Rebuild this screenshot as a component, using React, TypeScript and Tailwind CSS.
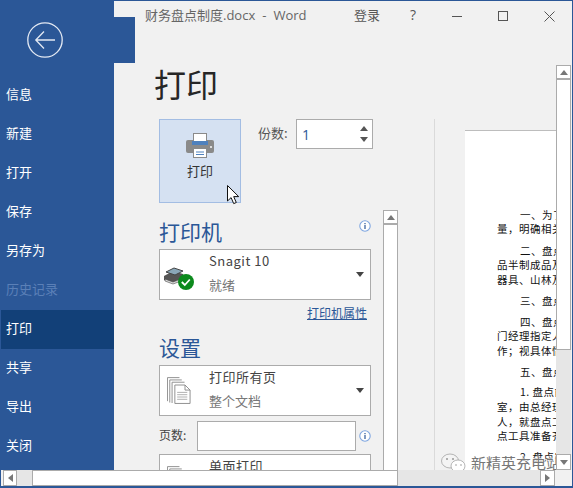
import React from "react";

const font = { fontFamily: '"Open Sans", "Noto Sans CJK SC", sans-serif' };
const cjk = { fontFamily: '"Noto Sans CJK SC", sans-serif' };

function Tri({ dir, color = "#555" }: { dir: "up" | "down" | "left" | "right"; color?: string }) {
  const pts = { up: "0,5 4,0 8,5", down: "0,0 8,0 4,5", left: "5,0 5,8 0,4", right: "0,0 0,8 5,4" }[dir];
  const vertical = dir === "up" || dir === "down";
  return (
    <svg width={vertical ? 8 : 5} height={vertical ? 5 : 8} viewBox={vertical ? "0 0 8 5" : "0 0 5 8"}>
      <polygon points={pts} fill={color} />
    </svg>
  );
}

function Info() {
  return (
    <svg width="12" height="12" viewBox="0 0 12 12">
      <circle cx="6" cy="6" r="5.2" fill="#fff" stroke="#7fa6e0" strokeWidth="1.1" />
      <rect x="5.4" y="5" width="1.2" height="4" fill="#2b5797" />
      <rect x="5.4" y="3" width="1.2" height="1.2" fill="#2b5797" />
    </svg>
  );
}

function ArrowBox({ dir, className = "" }: { dir: "up" | "down" | "left" | "right"; className?: string }) {
  return (
    <div className={`flex items-center justify-center bg-white border border-[#ababab] shrink-0 ${className}`}>
      <Tri dir={dir} color="#777" />
    </div>
  );
}

function Doc() {
  return (
    <svg width="24" height="28" viewBox="0 0 26 30" fill="none" stroke="#8a8a8a" strokeWidth="1">
      <path d="M.5 26V.5h13" />
      <path d="M3 27.5V3h13" />
      <path d="M5.5 28V5.5H19" />
      <path d="M8.5 28.5V8.5h11l5.5 5.5v14.5z" fill="#fff" />
      <path d="M19.5 8.5v5.5h5.5" />
      <path d="M11 16.5h11M11 19h11M11 21.5h11M11 24h11" stroke="#aaa" />
    </svg>
  );
}

function Select({ title, sub, icon }: { title: string; sub: string; icon: React.ReactNode }) {
  return (
    <div className="w-[212px] h-[51px] shrink-0 bg-white border border-[#ababab] flex items-center">
      <div className="w-[49px] h-full shrink-0 flex items-center pl-[7px]">{icon}</div>
      <div className="flex-1 flex flex-col h-full">
        <div className="h-[24px] pt-[1px] text-[13px] leading-[20px] text-[#444] tracking-[0.5px]">{title}</div>
        <div className="h-[24px] text-[13px] leading-[22px] text-[#777]">{sub}</div>
      </div>
      <div className="pr-[6px] flex"><Tri dir="down" color="#444" /></div>
    </div>
  );
}

const navItems = ["信息", "新建", "打开", "保存", "另存为", "历史记录", "打印", "共享", "导出", "关闭"];

const pageLines: [string, number, number][] = [
  ["一、为了加强公司财产管理", 23, 215],
  ["量，明确相关责任", 0, 229],
  ["二、盘点范围", 23, 251],
  ["品半制成品及原材料", 0, 265],
  ["器具、山林及其他", 0, 280],
  ["三、盘点时间", 23, 301],
  ["四、盘点人员", 23, 322],
  ["门经理指定人员", 0, 336],
  ["作；视具体情况", 0, 351],
  ["五、盘点程序", 23, 372],
  ["1. 盘点前准备", 23, 392],
  ["室，由总经理指定", 0, 407],
  ["人，就盘点工作", 0, 422],
  ["点工具准备齐全", 0, 436],
  ["2. 盘点实施", 23, 457],
];

export default function App() {
  return (
    <div className="relative w-[573px] h-[488px] overflow-hidden bg-[#f1f1f1] flex flex-col border-t border-l border-r border-b-2 border-[#2b5797]" style={font}>
      <div className="flex h-[469px] shrink-0">
        {/* sidebar */}
        <aside className="w-[113px] shrink-0 bg-[#2b5797] flex flex-col relative">
          <div className="h-[75px] shrink-0 pl-[26px] pt-[21px]">
            <svg width="36" height="36" viewBox="0 0 36 36" fill="none" stroke="#e3e9f3" strokeWidth="1.3">
              <circle cx="18" cy="18" r="17.2" />
              <path d="M9 18h19M17 9.5 8.8 18l8.2 8.5" />
            </svg>
          </div>
          <div className="absolute left-[113px] top-[16px] w-[21px] h-[46px] bg-[#2b5797]" />
          {navItems.map((n) => (
            <div
              key={n}
              className={`h-[39px] shrink-0 flex items-center pl-[5px] pb-[3px] text-[13px] ${n === "打印" ? "bg-[#124078] text-white" : n === "历史记录" ? "text-[#5b80b7]" : "text-white"}`}
              style={cjk}
            >
              {n}
            </div>
          ))}
        </aside>

        <main className="flex-1 flex flex-col min-w-0">
          {/* title bar */}
          <div className="h-[64px] shrink-0 flex items-start pt-[4px] text-[13px] leading-[20px] text-[#666]">
            <div className="w-[240px] pl-[31px] shrink-0 whitespace-nowrap">
              财务盘点制度.docx<span className="ml-[7px]">-</span><span className="ml-[7px]">Word</span>
            </div>
            <div className="w-[56px] shrink-0 text-[#555]">登录</div>
            <div className="w-[42px] shrink-0 text-[14px] text-[#555]">?</div>
            <div className="w-[46px] shrink-0 pt-[11px]"><div className="w-[10px] h-px bg-[#555]" /></div>
            <div className="w-[46px] shrink-0 pt-[6px]"><div className="w-[10px] h-[10px] border border-[#555]" /></div>
            <div className="shrink-0 pt-[6px]">
              <svg width="11" height="11" viewBox="0 0 11 11" stroke="#555" strokeWidth="1"><path d="M.5.5l10 10M10.5.5l-10 10" /></svg>
            </div>
          </div>

          <div className="flex-1 flex min-h-0">
            <div className="w-[442px] shrink-0 flex flex-col min-w-0">
              <h1 className="h-[54px] shrink-0 pl-[40px] text-[32px] leading-[36px] text-[#262626] font-normal" style={cjk}>打印</h1>
              <div className="flex-1 flex min-h-0">
                {/* settings panel */}
                <div className="w-[320px] shrink-0 pl-[45px] flex flex-col min-h-0">
                  <div className="h-[91px] shrink-0 flex items-start">
                    <div className="relative w-[82px] h-[84px] shrink-0 bg-[#d5e1f2] border border-[#a3bde3] flex flex-col items-center pt-[13px]">
                      <svg width="28" height="25" viewBox="0 0 28 25">
                        <rect x="0" y="7" width="28" height="13" rx="2" fill="#8a8a8a" />
                        <rect x="7.5" y="0.5" width="13" height="9" fill="#fff" stroke="#8a8a8a" />
                        <rect x="6" y="8" width="16" height="4" fill="#4f81bd" />
                        <rect x="7.5" y="15.5" width="13" height="9" fill="#fff" stroke="#8a8a8a" />
                        <path d="M10 19h8M10 21.5h8" stroke="#4f81bd" />
                        <rect x="24" y="13" width="2" height="2" fill="#ddd" />
                      </svg>
                      <div className="mt-[3px] text-[13px] leading-[20px] text-[#333]" style={cjk}>打印</div>
                      <svg className="absolute left-[67px] top-[65px]" width="13" height="20" viewBox="0 0 13 20">
                        <path d="M.5.5v15.5l3.6-3.4 2.6 6 2.6-1.1-2.6-5.9h5z" fill="#fff" stroke="#111" strokeWidth="1" />
                      </svg>
                    </div>
                    <div className="ml-[17px] w-[38px] shrink-0 pt-[4px] text-[13px] leading-[20px] text-[#555]" style={cjk}>份数:</div>
                    <div className="w-[77px] h-[30px] shrink-0 bg-white border border-[#ababab] flex items-center justify-between pl-[5px] pr-[4px]">
                      <span className="text-[14px] text-[#2b5797]">1</span>
                      <div className="flex flex-col gap-[6px]"><Tri dir="up" /><Tri dir="down" /></div>
                    </div>
                  </div>

                  <div className="flex-1 flex min-h-0">
                    <div className="w-[224px] shrink-0 overflow-hidden" style={cjk}>
                      <div className="h-[39px] w-[212px] flex items-start justify-between pt-[7px]">
                        <div className="text-[21px] leading-[28px] text-[#2b5797]">打印机</div>
                        <div className="pt-[3px] flex"><Info /></div>
                      </div>
                      <Select
                        title="Snagit 10"
                        sub="就绪"
                        icon={
                          <svg className="-ml-[3px] mt-[6px]" width="30" height="26" viewBox="0 0 30 26">
                            <path d="M0 11 9 6l10 3v4L8 18 0 15z" fill="#555" />
                            <path d="M2 7l8-4 9 3-8 4z" fill="#8aa7b8" stroke="#444" strokeWidth="1" />
                            <path d="M1 14l8 3 8-3v2l-8 3-8-3z" fill="#ddd" stroke="#444" strokeWidth=".6" />
                            <circle cx="22" cy="17" r="8" fill="#0c8a1d" />
                            <path d="M17.8 17l3 3 5-5.5" fill="none" stroke="#fff" strokeWidth="1.8" />
                          </svg>
                        }
                      />
                      <div className="h-[35px] w-[208px] pt-[3px] text-right text-[12px] leading-[20px] text-[#2b5797] underline">打印机属性</div>
                      <div className="h-[30px] text-[21px] leading-[24px] text-[#2b5797]">设置</div>
                      <Select title="打印所有页" sub="整个文档" icon={<Doc />} />
                      <div className="mt-[5px] h-[30px] w-[212px] flex items-center">
                        <div className="w-[38px] shrink-0 pb-[2px] text-[12px] text-[#444]">页数:</div>
                        <div className="w-[159px] h-[30px] shrink-0 bg-white border border-[#ababab]" />
                        <div className="ml-[3px] flex"><Info /></div>
                      </div>
                      <div className="mt-[3px]">
                        <Select title="单面打印" sub="只打印一侧的页面" icon={<Doc />} />
                      </div>
                    </div>
                    <div className="w-[15px] shrink-0 flex flex-col">
                      <ArrowBox dir="up" className="h-[15px] border-b-2" />
                      <div className="flex-1 bg-white border-x border-[#ababab]" />
                    </div>
                  </div>
                </div>

                {/* preview */}
                <div className="relative flex-1 min-w-0 border-l border-[#dadada] overflow-hidden pl-[30px] pt-[11px]">
                  <div className="h-full bg-white border-t border-[#bdbdbd] overflow-hidden" style={cjk}>
                    {pageLines.map(([t, ind, y], i) => (
                      <div
                        key={t}
                        className="whitespace-nowrap text-[10.5px] leading-[14px] tracking-[0.5px] text-[#111]"
                        style={{ paddingLeft: 32 + ind, marginTop: i === 0 ? 77 : y - pageLines[i - 1][2] - 14 }}
                      >
                        {t}
                      </div>
                    ))}
                  </div>
                  {/* watermark */}
                  <div className="absolute left-[6px] top-[334px] flex items-center whitespace-nowrap">
                    <svg width="25" height="20" viewBox="0 0 25 20">
                      <ellipse cx="9" cy="8" rx="8.5" ry="7" fill="#f4f4f4" stroke="#999" strokeWidth=".7" />
                      <ellipse cx="17" cy="13" rx="7" ry="6" fill="#fff" stroke="#999" strokeWidth=".7" />
                      <circle cx="6" cy="6" r="1" fill="#999" /><circle cx="12" cy="6" r="1" fill="#999" />
                      <circle cx="15" cy="12" r=".8" fill="#999" /><circle cx="20" cy="12" r=".8" fill="#999" />
                    </svg>
                    <span className="ml-[5px] text-[15px] leading-[18px] text-[#777]" style={{ ...cjk, textShadow: "0 0 2px #fff, 0 0 2px #fff, 0 0 2px #fff" }}>新精英充电站</span>
                  </div>
                </div>
              </div>
            </div>

            {/* right scrollbar */}
            <div className="w-[15px] shrink-0 flex flex-col bg-[#e6e6e6]">
              <ArrowBox dir="up" className="h-[15px] border-b-2" />
              <div className="h-[270px] shrink-0 bg-white border border-t-0 border-[#ababab]" />
              <div className="flex-1" />
              <ArrowBox dir="down" className="h-[16px]" />
            </div>
          </div>
        </main>
      </div>

      {/* bottom scrollbar */}
      <div className="h-[16px] shrink-0 flex">
        <div className="w-[2px] shrink-0" />
        <ArrowBox dir="left" className="w-[14px]" />
        <div className="w-[15px] shrink-0 bg-[#e6e6e6]" />
        <div className="w-[366px] shrink-0 bg-white border border-[#ababab]" />
        <div className="w-[142px] shrink-0 bg-[#e6e6e6]" />
        <ArrowBox dir="right" className="w-[15px]" />
      </div>
    </div>
  );
}
